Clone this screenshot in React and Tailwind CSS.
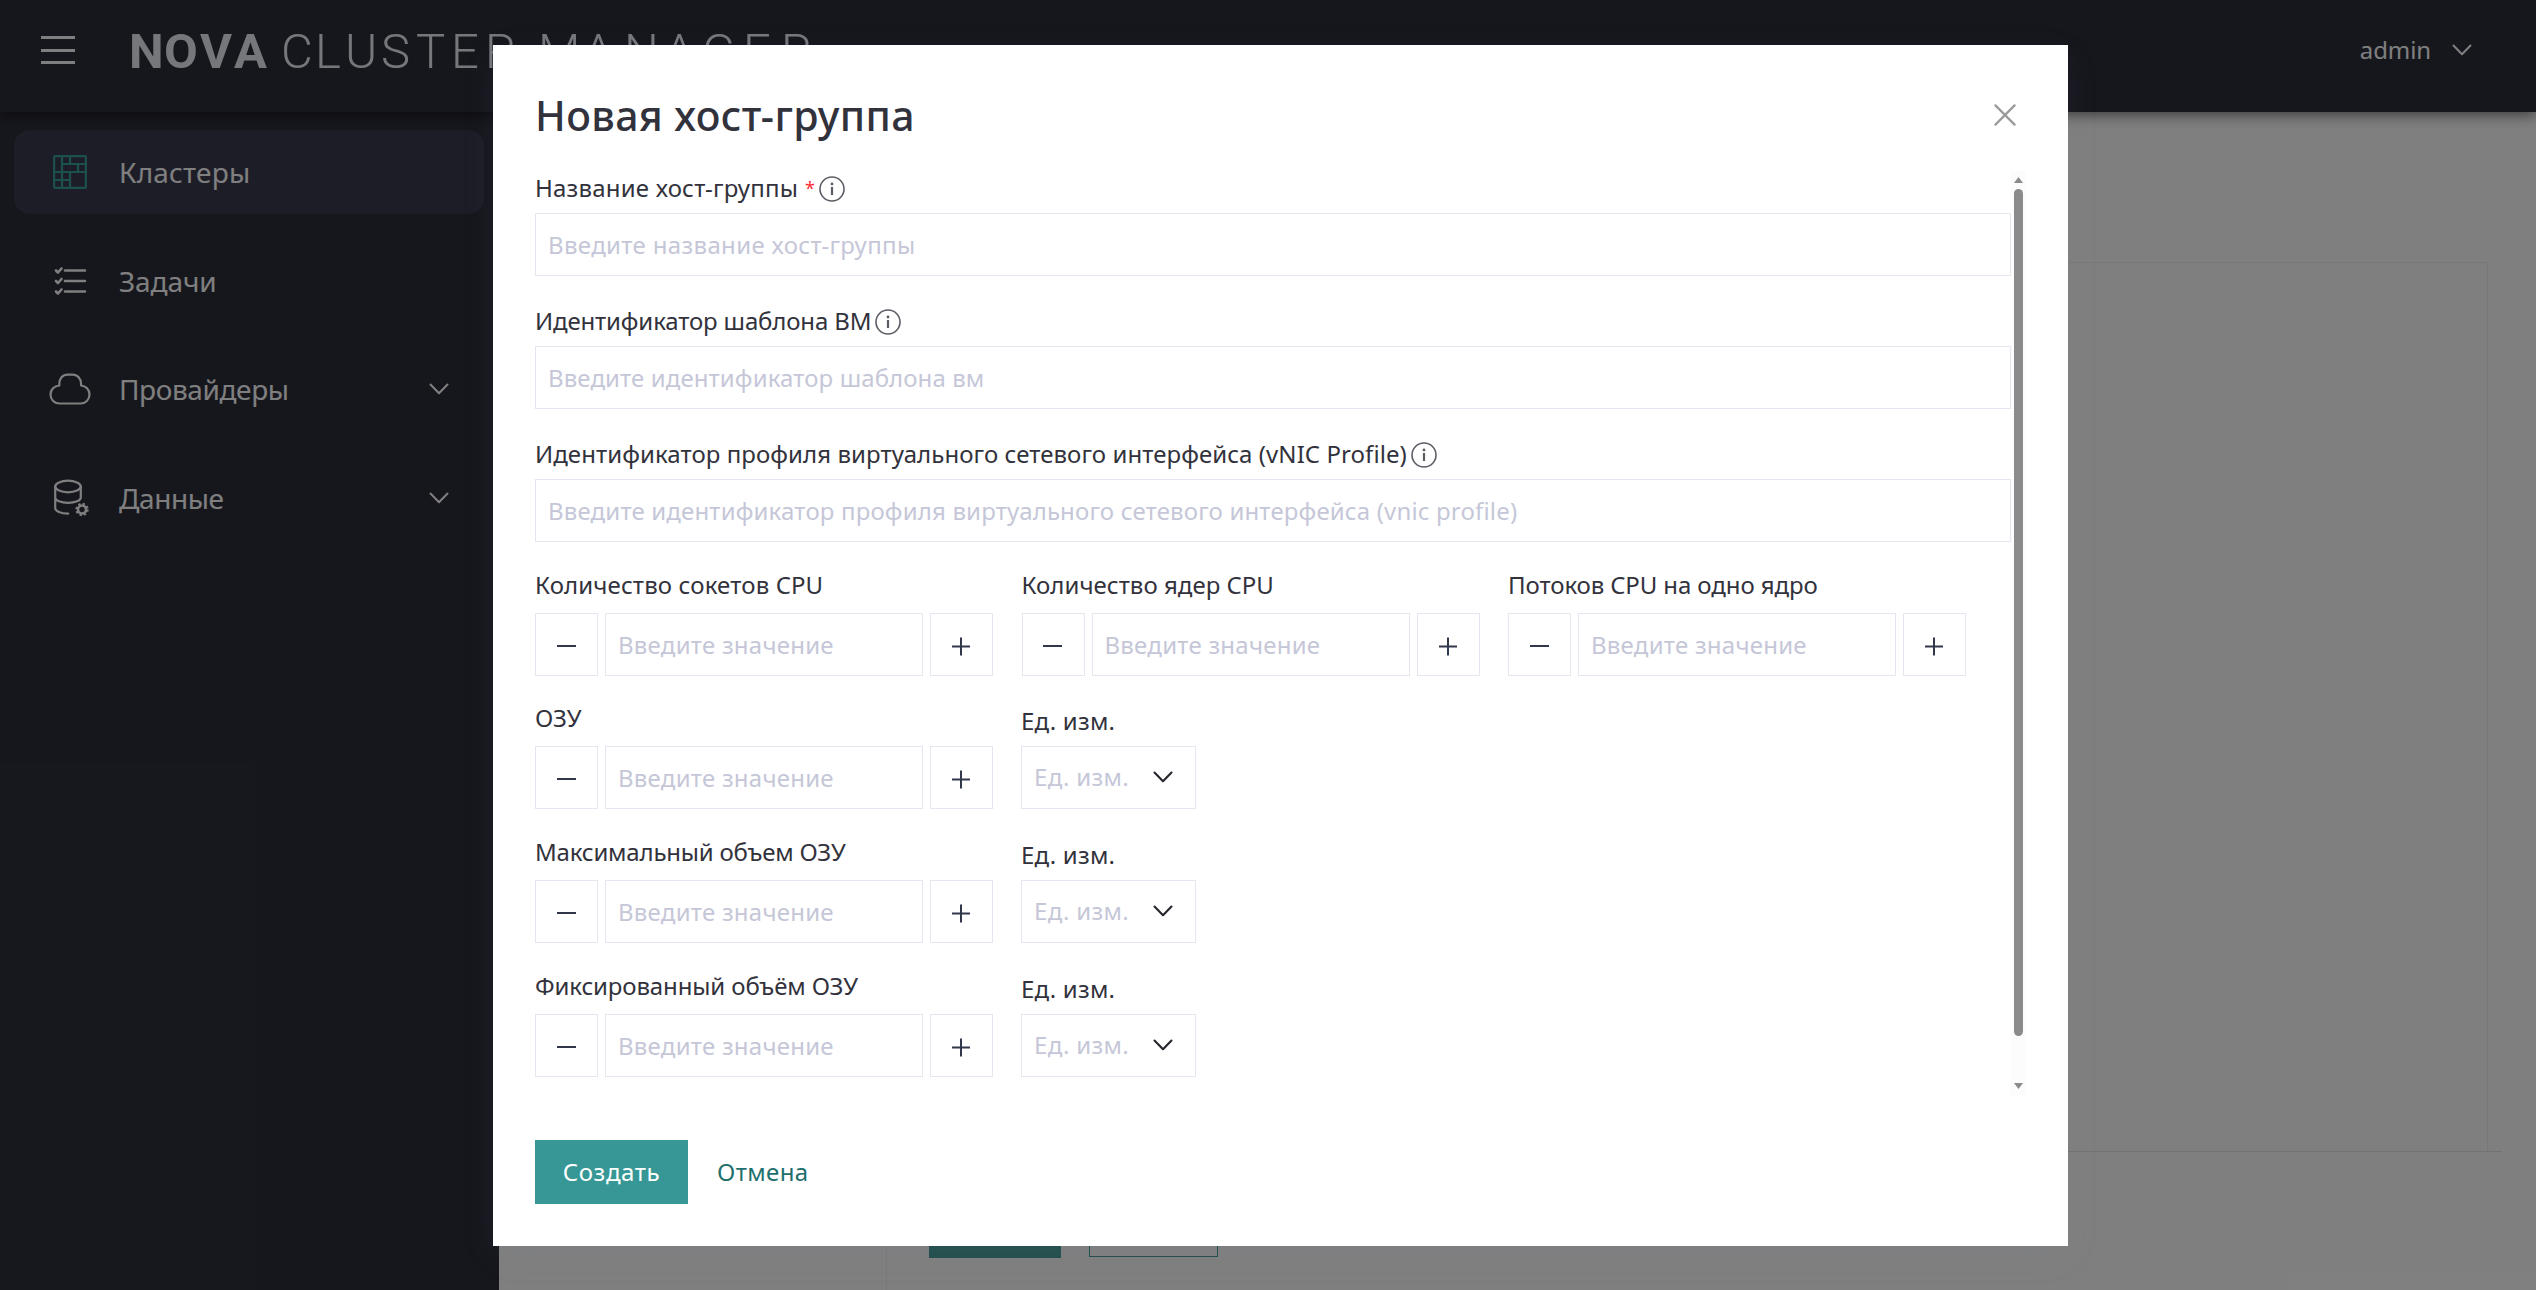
import React, { useState } from "react";

const menu = [
  { name: "Кластеры", icon: GridIcon, active: true, text: "tracking-[0.2px]" },
  { name: "Задачи", icon: TasksIcon, text: "tracking-[-0.1px]" },
  { name: "Провайдеры", icon: CloudIcon, nested: true, text: "tracking-[-0.4px]" },
  { name: "Данные", icon: DatabaseIcon, nested: true, text: "tracking-[-0.4px]" },
];

const textFields = [
  {
    id: "name",
    label: "Название хост-группы",
    placeholder: "Введите название хост-группы",
    required: true,
    labelClass: "tracking-[0.2px]",
    inputClass: "tracking-[0.34px]",
  },
  {
    id: "template",
    label: "Идентификатор шаблона ВМ",
    placeholder: "Введите идентификатор шаблона вм",
    labelClass: "tracking-[-0.15px]",
    inputClass: "tracking-[0.1px]",
  },
  {
    id: "vnic",
    label: "Идентификатор профиля виртуального сетевого интерфейса (vNIC Profile)",
    placeholder: "Введите идентификатор профиля виртуального сетевого интерфейса (vnic profile)",
    labelClass: "tracking-[0.07px]",
    inputClass: "tracking-[0.16px]",
  },
];

const cpuFields = [
  { label: "Количество сокетов CPU", labelClass: "tracking-[0.13px]" },
  { label: "Количество ядер CPU", labelClass: "tracking-[0.03px]" },
  { label: "Потоков CPU на одно ядро", labelClass: "tracking-[-0.1px]" },
];

const memoryFields = [
  { label: "ОЗУ", labelClass: "tracking-[0px]" },
  { label: "Максимальный объем ОЗУ", labelClass: "tracking-[-0.2px]" },
  { label: "Фиксированный объём ОЗУ", labelClass: "tracking-[-0.13px]" },
];

function GridIcon() {
  return (
    <svg width="34" height="34" viewBox="0 0 34 34" fill="none" stroke="#38a09a" strokeWidth="2.2">
      <rect x="1.1" y="1.1" width="31.8" height="31.8" rx="1" />
      <path d="M9 1v32M17 1v8M1 17h32M9 9h24M25 9v8M17 17v16M1 25h16" />
    </svg>
  );
}

function TasksIcon() {
  return (
    <svg width="34" height="30" viewBox="0 0 34 30" fill="none" stroke="#fff" strokeWidth="2.6" strokeLinecap="round" strokeLinejoin="round">
      <path d="M12 4.500h20M12 15h20M12 25.500h20" />
      <path d="M3 4.500l2 2 3.500-4M3 15l2 2 3.500-4M3 25.500l2 2 3.500-4" />
    </svg>
  );
}

function CloudIcon() {
  return (
    <svg width="42" height="32" viewBox="0 0 42 32" fill="none" stroke="#fff" strokeWidth="2.2" strokeLinejoin="round">
      <path d="M10.500 30.500h21c5 0 9-3.900 9-9 0-4.800-3.700-8.600-8.400-9V11c0-5.400-3.600-9.400-8.600-9.400h-5c-5 0-8.200 4-8.200 9.400v1.500c-5.100.3-8.800 4.200-8.800 9 0 5.100 4 9 9 9z" />
    </svg>
  );
}

function DatabaseIcon() {
  return (
    <svg width="36" height="38" viewBox="0 0 36 38" fill="none" stroke="#fff" strokeWidth="2.2" strokeLinecap="round" className="ml-[3px]">
      <ellipse cx="14" cy="7.500" rx="12.800" ry="5.800" />
      <path d="M1.200 7.500v21.500c0 3.200 5.500 5.600 13 5.600M26.800 7.500v11c0 3.200-5.700 5.300-12.800 5.300S1.200 21.700 1.200 18.500" />
      <circle cx="28" cy="30.500" r="4" strokeWidth="2.600" />
      <circle cx="28" cy="30.500" r="5.700" strokeWidth="2" strokeDasharray="2.200 2.276" strokeLinecap="butt" />
    </svg>
  );
}

function Chevron({ className, width = 20, stroke = 2 }) {
  return (
    <svg className={className} width={width} height={width * 0.6} viewBox="0 0 20 12" fill="none" stroke="currentColor" strokeWidth={stroke} strokeLinecap="round" strokeLinejoin="round">
      <path d="M1.500 1.500L10 10.200l8.500-8.700" />
    </svg>
  );
}

function InfoIcon() {
  return (
    <svg width="26" height="26" viewBox="0 0 26 26" fill="none" stroke="#5c5c64" strokeWidth="1.600" className="mt-[2px]">
      <circle cx="13" cy="13" r="12" />
      <path d="M13 11v8" strokeWidth="2.200" />
      <circle cx="13" cy="8" r="1.400" fill="#5c5c64" stroke="none" />
    </svg>
  );
}

// every letter has its own x, the wordmark is wider than the font
function Logo() {
  return (
    <svg width="710" height="72" viewBox="0 0 710 72" fill="#eaeef6" className="font-[Roboto,sans-serif] text-[49px]">
      <text y="54" x="8 43 79 113" className="font-bold">NOVA</text>
      <text y="54" x="160 194 224 260 295 330 364" className="font-light">CLUSTER</text>
      <text y="54" x="417 462 503 543 581 622 660" className="font-light">MANAGER</text>
    </svg>
  );
}

function Header() {
  return (
    <header className="relative z-10 flex h-28 shrink-0 items-start bg-[#2d2d3b] pl-[41px] shadow-[0_2px_14px_rgba(0,0,0,0.6)]">
      <button className="mt-9 flex w-[34px] flex-col gap-[9.500px]">
        <span className="h-[3px] bg-white" />
        <span className="h-[3px] bg-white" />
        <span className="h-[3px] bg-white" />
      </button>
      <div className="mt-[14px] ml-[46px]">
        <Logo />
      </div>
      <div className="mt-[34px] mr-[64px] ml-auto flex h-8 items-center text-2xl tracking-[-0.1px] text-white">
        admin
        <Chevron className="ml-[21px]" width={20} />
      </div>
    </header>
  );
}

function Sidebar() {
  return (
    <nav className="flex w-[499px] shrink-0 flex-col gap-[24.500px] bg-[#2d2d3b] px-[14px] pt-[18px]">
      {menu.map(({ name, icon: Icon, active, nested, text }) => (
        <div
          key={name}
          className={`flex h-[84px] w-[470px] items-center rounded-2xl pr-[35px] pl-[34px] text-[28px] text-white ${
            active ? "bg-[#3b3b4f]" : ""
          }`}
        >
          <span className="flex w-[44px] justify-center">
            <Icon />
          </span>
          <span className={`ml-[27px] ${text}`}>{name}</span>
          {nested && <Chevron className="ml-auto" width={20} />}
        </div>
      ))}
    </nav>
  );
}

function Page() {
  return (
    <main className="flex flex-1 bg-white">
      <div className="w-[388px] border-r border-[#f0f0f4]" />
      <div className="flex flex-1 flex-col pt-[150px]">
        <div className="mr-[48px] h-[889px] border-t border-r border-[#f0f0f4]" />
        <div className="mr-[34px] border-t border-[#e4e4ea]" />
        <div className="mt-[42px] ml-[42px] flex gap-7">
          <div className="h-16 w-[132px] bg-[#449f9b]" />
          <div className="h-[63px] w-[129px] border border-[#449f9b]" />
        </div>
      </div>
    </main>
  );
}

function TextField({ field, value, onChange }) {
  return (
    <div className="mb-7">
      <div className="mb-[10px] flex h-8 items-center gap-1 pt-[2px] text-[#32323c]">
        <label htmlFor={field.id} className={field.labelClass}>
          {field.label}
        </label>
        {field.required && <span className="ml-[3px] text-lg text-[#ff2a35]">*</span>}
        <InfoIcon />
      </div>
      <input
        id={field.id}
        value={value}
        onChange={onChange}
        placeholder={field.placeholder}
        className={`block h-[63px] w-full border border-[#e6e6f0] px-3 outline-none placeholder:text-[#c5c7d8] ${field.inputClass}`}
      />
    </div>
  );
}

function Counter({ label, labelClass }) {
  const [value, setValue] = useState("");

  const step = (delta) => setValue(String(Math.max(0, Number(value) + delta)));

  return (
    <div className="w-[458px]">
      <div className={`mb-3 h-8 leading-8 text-[#32323c] ${labelClass}`}>{label}</div>
      <div className="flex gap-[7px]">
        <button onClick={() => step(-1)} className="flex h-[63px] w-[63px] items-center justify-center border border-[#e6e6f0] pr-px">
          <span className="mt-[3px] h-[2.500px] w-[19px] bg-[#32384c]" />
        </button>
        <input
          value={value}
          onChange={(e) => setValue(e.target.value)}
          placeholder="Введите значение"
          className="h-[63px] w-[318px] border border-[#e6e6f0] px-3 tracking-[0.24px] outline-none placeholder:text-[#c5c7d8]"
        />
        <button onClick={() => step(1)} className="flex h-[63px] w-[63px] items-center justify-center border border-[#e6e6f0] pr-px">
          <svg width="18" height="19" viewBox="0 0 18 19" className="mt-[3px]" stroke="#32384c" strokeWidth="2">
            <path d="M9 0.500v18M0 9.500h18" />
          </svg>
        </button>
      </div>
    </div>
  );
}

function UnitSelect() {
  return (
    <div className="w-[175px]">
      <div className="mb-[9px] pt-[3px] leading-8 tracking-[0.2px] text-[#32323c]">Ед. изм.</div>
      <button className="flex h-[63px] w-full items-center justify-between border border-[#e6e6f0] pr-[22px] pb-px pl-3 tracking-[0.3px] text-[#c5c7d8]">
        Ед. изм.
        <Chevron className="text-[#25252d]" width={20} stroke={2.1} />
      </button>
    </div>
  );
}

function Scrollbar() {
  return (
    <div className="flex w-[15px] shrink-0 flex-col items-center bg-[#fcfcfc] py-[6px]">
      <svg width="9" height="6" viewBox="0 0 9 6" fill="#8b8b8b">
        <path d="M4.500 0L9 6H0z" />
      </svg>
      <div className="mt-[6px] h-[847px] w-[9px] rounded-full bg-[#8b8b8b]" />
      <svg width="9" height="6" viewBox="0 0 9 6" fill="#8b8b8b" className="mt-auto">
        <path d="M4.500 6L9 0H0z" />
      </svg>
    </div>
  );
}

function HostGroupModal() {
  const [values, setValues] = useState({ name: "", template: "", vnic: "" });

  return (
    <div className="flex h-[1201px] w-[1575px] flex-col bg-white pt-[45px] pl-[42px] text-2xl shadow-[0_10px_34px_rgba(130,145,165,0.08)]">
      <div className="flex h-[50px] items-center justify-between pr-[52px]">
        <h2 className="text-[41px] leading-[50px] font-medium tracking-[0.4px] text-[#32323c]">Новая хост-группа</h2>
        <svg width="22" height="22" viewBox="0 0 23 23" stroke="#9b9b9b" strokeWidth="2.400" strokeLinecap="round">
          <path d="M1.500 1.500l20 20M21.500 1.500l-20 20" />
        </svg>
      </div>

      <div className="mt-[31px] flex h-[924px]">
        <div className="w-[1476px] overflow-hidden">
          {textFields.map((field) => (
            <TextField
              key={field.id}
              field={field}
              value={values[field.id]}
              onChange={(e) => setValues({ ...values, [field.id]: e.target.value })}
            />
          ))}
          <div className="-mt-px mb-[26px] flex gap-[28.500px]">
            {cpuFields.map((field) => (
              <Counter key={field.label} {...field} />
            ))}
          </div>
          <div className="flex flex-col gap-[27px]">
            {memoryFields.map((field) => (
              <div key={field.label} className="flex gap-[28px]">
                <Counter {...field} />
                <UnitSelect />
              </div>
            ))}
          </div>
        </div>
        <Scrollbar />
      </div>

      <div className="mt-[45px] flex items-center">
        <button className="h-16 w-[153px] bg-[#379796] tracking-[0.6px] text-white">Создать</button>
        <button className="ml-[29px] tracking-[0.4px] text-[#1e706d]">Отмена</button>
      </div>
    </div>
  );
}

export default function App() {
  return (
    <div className="relative h-[1290px] w-[2536px] overflow-hidden font-['Noto_Sans',sans-serif]">
      <div className="flex h-full flex-col">
        <Header />
        <div className="flex flex-1">
          <Sidebar />
          <Page />
        </div>
      </div>
      <div className="absolute inset-0 z-20 bg-black/50 pt-[45px] pl-[493px]">
        <HostGroupModal />
      </div>
    </div>
  );
}
